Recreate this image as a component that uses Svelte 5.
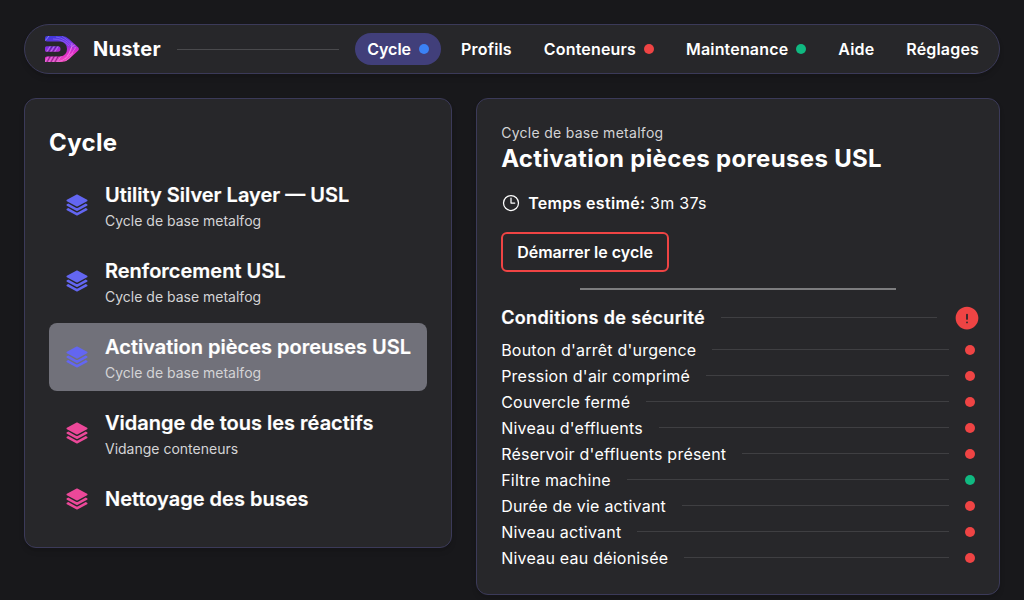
<script>
  const nav = [
    { label: 'Cycle', dot: 'blue', active: true },
    { label: 'Profils' },
    { label: 'Conteneurs', dot: 'red' },
    { label: 'Maintenance', dot: 'green' },
    { label: 'Aide' },
    { label: 'Réglages' },
  ];

  const cycles = [
    { name: 'Utility Silver Layer — USL', profile: 'Cycle de base metalfog', tone: 'indigo' },
    { name: 'Renforcement USL', profile: 'Cycle de base metalfog', tone: 'indigo' },
    { name: 'Activation pièces poreuses USL', profile: 'Cycle de base metalfog', tone: 'indigo' },
    { name: 'Vidange de tous les réactifs', profile: 'Vidange conteneurs', tone: 'pink' },
    { name: 'Nettoyage des buses', tone: 'pink' },
  ];

  let selected = $state(2);

  const conditions = [
    { label: "Bouton d'arrêt d'urgence", dot: 'red' },
    { label: "Pression d'air comprimé", dot: 'red' },
    { label: 'Couvercle fermé', dot: 'red' },
    { label: "Niveau d'effluents", dot: 'red' },
    { label: "Réservoir d'effluents présent", dot: 'red' },
    { label: 'Filtre machine', dot: 'green' },
    { label: 'Durée de vie activant', dot: 'red' },
    { label: 'Niveau activant', dot: 'red' },
    { label: 'Niveau eau déionisée', dot: 'red' },
  ];
</script>

<div class="page">
  <header class="bar">
    <svg class="logo" viewBox="0 0 34 26" aria-hidden="true">
      <defs>
        <linearGradient id="base" x1="0.35" y1="0" x2="0.6" y2="1">
          <stop offset="0" stop-color="#4138dc" />
          <stop offset="0.4" stop-color="#8a2fe2" />
          <stop offset="0.7" stop-color="#e02cc8" />
          <stop offset="1" stop-color="#f050b8" />
        </linearGradient>
        <clipPath id="shape">
          <path d="M2 0H17Q21 0 24 3L33.3 11.6Q34.4 13 33.3 14.4L24 23Q21 26 17 26H0V22Q0 20.5 2 20.5H15Q22 19.5 22 13T15 5.5H2Q0 5.500 0 3.700V2Q0 0 2 0Z" />
          <path d="M1.500 10.300H13Q15.500 10.300 15.500 13T13 15.800H1.500Q0 15.800 0 14.300V11.800Q0 10.300 1.500 10.300Z" />
        </clipPath>
      </defs>
      <g clip-path="url(#shape)">
        <rect width="34" height="26" fill="url(#base)" />
        <g fill="none" stroke-width="0.7">
          <path stroke="#c9b4ee" opacity="0.8" d="M0 5 4 0M1 17 6 9M5 17 10 9M9 17 14 9M0 26 4 19M4 26 8 19M8 26 12 19M12 26 17 19" />
          <path stroke="#33215f" opacity="0.8" d="M3 17 8 9M7 17 12 9M2 26 6 19M6 26 10 19M10 26 14 19" />
          <path stroke="#f58bea" opacity="0.8" d="M13 26Q23 23 25 15T34 9M18 27Q25 23 28 17M22 20Q27 15 27 7M20 23Q28 18 31 11" />
          <path stroke="#8f7dff" opacity="0.8" d="M11 1Q20 2 27 11M8 3Q18 3 24 10M17 0Q24 4 30 12" />
        </g>
      </g>
    </svg>
    <span class="brand">Nuster</span>
    <span class="rule brand-rule"></span>
    <nav>
      {#each nav as item}
        <a class:active={item.active} href="#{item.label}">
          {item.label}
          {#if item.dot}<i class="dot {item.dot}"></i>{/if}
        </a>
      {/each}
    </nav>
  </header>

  <main>
    <section class="card list">
      <h1>Cycle</h1>
      <div class="items">
        {#each cycles as cycle, i}
          <button class="item" class:selected={selected === i} onclick={() => (selected = i)}>
            <svg class="stack {cycle.tone}" viewBox="0 0 24 24" fill="currentColor" aria-hidden="true">
              <path d="M11.644 1.59a.75.75 0 01.712 0l9.75 5.25a.75.75 0 010 1.32l-9.75 5.25a.75.75 0 01-.712 0l-9.75-5.25a.75.75 0 010-1.32l9.75-5.25z" />
              <path d="M3.265 10.602l7.668 4.129a2.25 2.25 0 002.134 0l7.668-4.13 1.37.739a.75.75 0 010 1.32l-9.75 5.25a.75.75 0 01-.71 0l-9.75-5.25a.75.75 0 010-1.32l1.37-.738z" />
              <path d="M10.933 19.231l-7.668-4.13-1.37.739a.75.75 0 000 1.32l9.75 5.25c.221.12.489.12.71 0l9.75-5.25a.75.75 0 000-1.32l-1.37-.738-7.668 4.13a2.25 2.25 0 01-2.134-.001z" />
            </svg>
            <span class="labels">
              <span class="name">{cycle.name}</span>
              {#if cycle.profile}<span class="profile">{cycle.profile}</span>{/if}
            </span>
          </button>
        {/each}
      </div>
    </section>

    <section class="card detail">
      <p class="kind">Cycle de base metalfog</p>
      <h2>{cycles[selected].name}</h2>
      <p class="time">
        <svg viewBox="0 0 24 24" fill="none" stroke="currentColor" stroke-width="1.5" stroke-linecap="round" stroke-linejoin="round" aria-hidden="true">
          <path d="M12 6v6h4.5m4.5 0a9 9 0 11-18 0 9 9 0 0118 0z" />
        </svg>
        <span><strong>Temps estimé:</strong> 3m 37s</span>
      </p>
      <button class="start">Démarrer le cycle</button>
      <div class="divider"></div>
      <div class="safety">
        <h3>Conditions de sécurité</h3>
        <span class="rule"></span>
        <svg viewBox="0 0 24 24" fill="currentColor" aria-hidden="true">
          <path fill-rule="evenodd" d="M2.25 12c0-5.385 4.365-9.75 9.75-9.75s9.75 4.365 9.75 9.75-4.365 9.75-9.75 9.75S2.25 17.385 2.25 12zM12 8.25a.75.75 0 01.75.75v3.75a.75.75 0 01-1.5 0V9a.75.75 0 01.75-.75zm0 8.25a.75.75 0 100-1.5.75.75 0 000 1.5z" />
        </svg>
      </div>
      <div class="conditions">
        {#each conditions as condition}
          <div class="condition">
            <span>{condition.label}</span>
            <span class="rule"></span>
            <i class="dot {condition.dot}"></i>
          </div>
        {/each}
      </div>
    </section>
  </main>
</div>

<style>
  :global(body) {
    background: #18181b;
    overflow: hidden;
  }
  .page {
    box-sizing: border-box;
    height: 600px;
    padding: 24px;
    overflow: hidden;
    display: flex;
    flex-direction: column;
    gap: 24px;
    background: #18181b;
    color: #fff;
    font: 400 16px/24px Inter, sans-serif;
  }
  .page * {
    box-sizing: border-box;
  }
  h1, h2, h3, p {
    margin: 0;
  }
  button {
    font: inherit;
    color: inherit;
    text-align: left;
    cursor: pointer;
  }
  .bar, .card {
    background: #27272a;
    border: 1px solid #3b3a59;
    box-shadow: 0 4px 6px -1px rgb(0 0 0 / 0.1), 0 2px 4px -2px rgb(0 0 0 / 0.1);
  }
  .bar {
    flex: none;
    height: 50px;
    border-radius: 25px;
    padding: 0 8px 0 20px;
    display: flex;
    align-items: center;
  }
  .logo {
    flex: none;
    width: 34px;
    height: 26px;
  }
  .brand {
    margin-left: 14px;
    font-size: 20px;
    font-weight: 700;
    line-height: 28px;
    letter-spacing: 0.3px;
  }
  .rule {
    flex: 1;
    height: 1px;
    margin: 0 16px;
    background: #3f3f42;
  }
  .brand-rule {
    background: #4a4a4d;
  }
  nav {
    display: flex;
    gap: 8px;
    letter-spacing: 0.17px;
  }
  nav a {
    display: flex;
    align-items: center;
    gap: 8px;
    padding: 4px 12px;
    border-radius: 16px;
    color: #fff;
    font-weight: 600;
    text-decoration: none;
  }
  nav a.active {
    background: #413f7a;
    letter-spacing: 0;
  }
  .dot {
    flex: none;
    width: 10px;
    height: 10px;
    border-radius: 50%;
  }
  .blue { background: #3b82f6; }
  .red { background: #ef4444; }
  .green { background: #10b981; }
  main {
    display: grid;
    grid-template-columns: 428fr 524fr;
    align-items: start;
    gap: 24px;
  }
  .card {
    border-radius: 12px;
    padding: 24px;
  }
  h1 {
    font-size: 24px;
    font-weight: 700;
    line-height: 40px;
    margin-bottom: 8px;
    letter-spacing: 0.3px;
  }
  .items {
    display: flex;
    flex-direction: column;
    gap: 8px;
  }
  .item {
    display: flex;
    align-items: center;
    gap: 16px;
    min-height: 48px;
    padding: 12px 16px;
    border: 0;
    border-radius: 8px;
    background: transparent;
    white-space: nowrap;
  }
  .item.selected {
    background: #71717a;
  }
  .stack {
    flex: none;
    width: 24px;
    height: 24px;
  }
  .indigo { color: #6366f1; }
  .pink { color: #ec4899; }
  .labels {
    display: flex;
    flex-direction: column;
  }
  .name {
    font-size: 20px;
    font-weight: 600;
    line-height: 24px;
    -webkit-text-stroke: 0.2px;
  }
  .profile {
    margin-top: 4px;
    font-size: 14px;
    line-height: 20px;
    margin-bottom: -4px;
    color: #d4d4d6;
  }
  .detail {
    display: flex;
    flex-direction: column;
  }
  .kind {
    font-size: 14px;
    line-height: 20px;
    letter-spacing: 0.28px;
    color: #d4d4d6;
  }
  h2 {
    font-size: 24px;
    font-weight: 700;
    line-height: 32px;
    letter-spacing: 0.33px;
  }
  .time {
    display: flex;
    align-items: center;
    gap: 7px;
    margin-top: 16px;
    letter-spacing: 0.25px;
  }
  .time svg {
    width: 20px;
    height: 20px;
  }
  strong {
    font-weight: 600;
    letter-spacing: 0.32px;
  }
  .start {
    align-self: flex-start;
    height: 40px;
    margin-top: 17px;
    padding: 0 14px;
    border: 2px solid #ef4444;
    border-radius: 6px;
    background: transparent;
    font-weight: 600;
  }
  .divider {
    align-self: center;
    width: 66.667%;
    height: 2px;
    margin: 16px 0 14px;
    background: #7d7d7f;
  }
  .safety {
    display: flex;
    align-items: center;
    height: 28px;
    margin: 0 -6px 6px 0;
  }
  .safety svg {
    flex: none;
    width: 28px;
    height: 28px;
    color: #ef4444;
  }
  h3 {
    font-size: 18px;
    font-weight: 600;
    line-height: 28px;
    letter-spacing: 0.36px;
    -webkit-text-stroke: 0.2px;
  }
  .conditions {
    display: flex;
    flex-direction: column;
    gap: 2px;
    letter-spacing: 0.23px;
  }
  .condition {
    display: flex;
    align-items: center;
  }
  .safety .rule, .condition .rule {
    margin-bottom: 1px;
  }
</style>
